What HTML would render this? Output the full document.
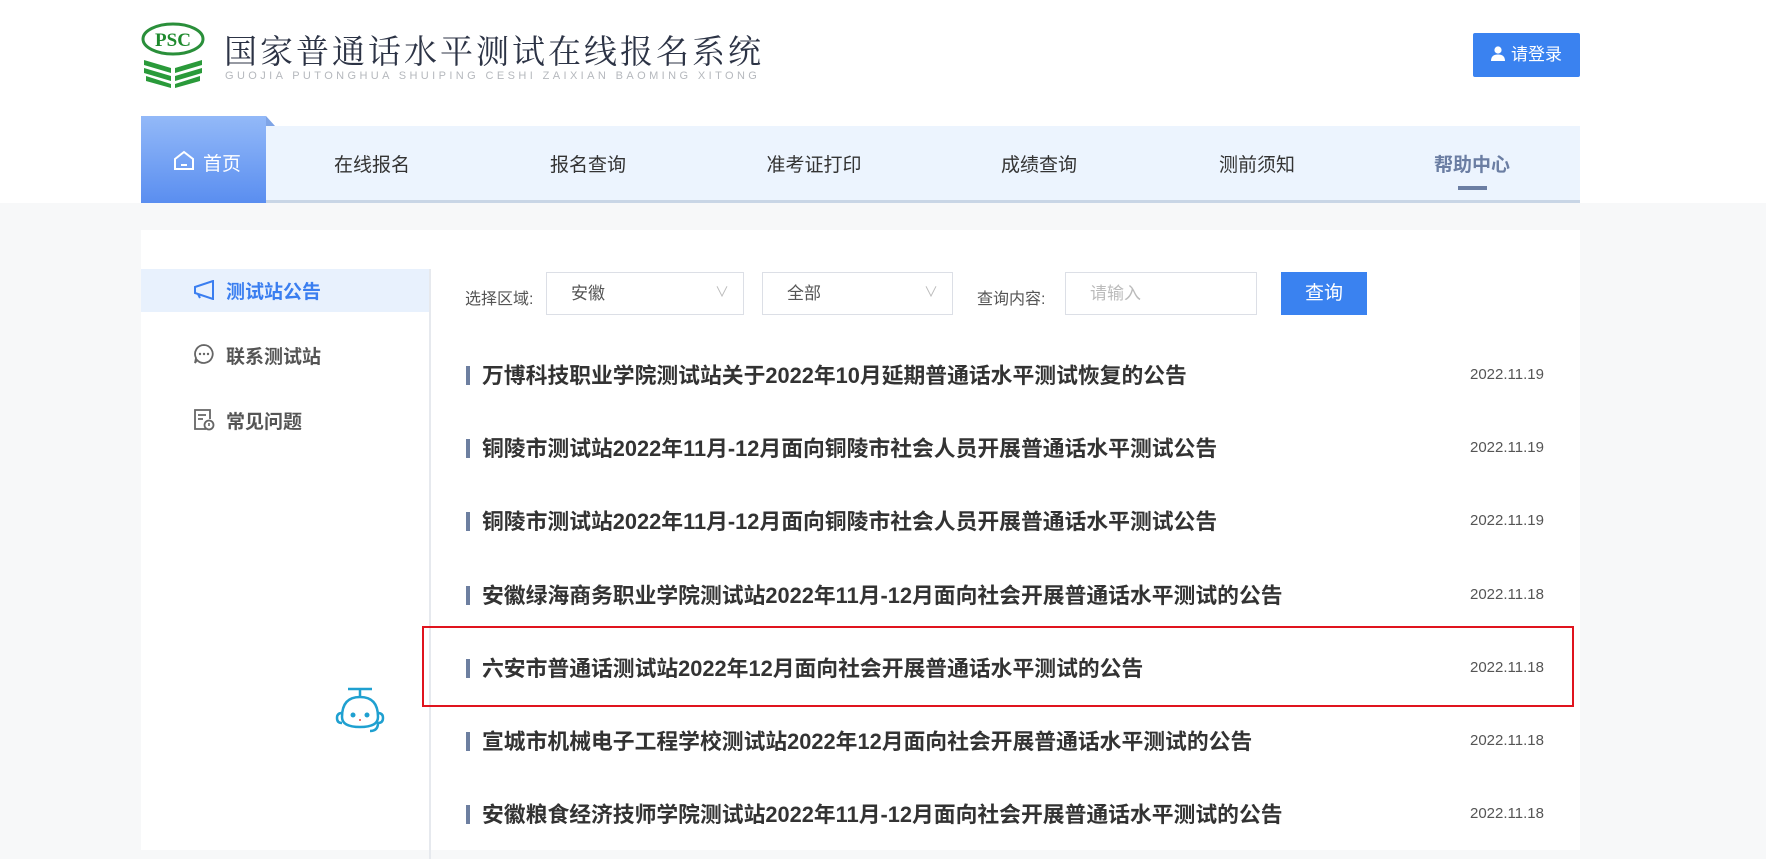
<!DOCTYPE html>
<html><head><meta charset="utf-8">
<style>
*{margin:0;padding:0;box-sizing:border-box}
body{width:1766px;height:848px;overflow:hidden;background:#f7f8f9;font-family:"Liberation Sans","Noto Sans CJK SC",sans-serif;position:relative}
.abs{position:absolute}
.top{left:0;top:0;width:1766px;height:203px;background:#fff}
.title{left:224px;top:26px;font-size:33px;color:#2c3345;letter-spacing:3px;font-family:"Liberation Serif","Noto Serif CJK SC",serif;white-space:nowrap}
.pinyin{left:225px;top:70px;font-size:11px;color:#b5b8bd;letter-spacing:3.4px;white-space:nowrap}
.login{left:1473px;top:33px;width:107px;height:44px;background:#3a82f0;border-radius:2px;color:#fff;font-size:17px;line-height:44px;text-align:center}
.nav{left:141px;top:126px;width:1439px;height:77px;background:#ecf4fe;border-bottom:3px solid #c9d6e6}
.nav span{position:absolute;top:24px;font-size:19px;color:#333;transform:translateX(-50%);white-space:nowrap}
.home{left:141px;top:116px;width:125px;height:87px;background:linear-gradient(#93b9f8,#5a8ef0);color:#fff;font-size:19px}
.card{left:141px;top:230px;width:1439px;height:620px;background:#fff}
.side{left:141px;top:269px;width:288px;height:43px;background:#e8f1fd}
.vline{left:429px;top:269px;width:2px;height:590px;background:#e6e9ee}
.si{left:226px;font-size:19px;font-weight:bold;color:#555;white-space:nowrap}
.lbl{font-size:16px;color:#555;top:283px}
.sel{top:272px;height:43px;border:1px solid #dcdfe6;font-size:17px;color:#555;line-height:41px;padding-left:24px}
.item{left:466px;font-size:21.8px;font-weight:bold;color:#333;white-space:nowrap}
.item:before{content:"";position:absolute;left:0;top:7px;width:4px;height:19px;background:#6d7fa0}
.item b{margin-left:16px;font-weight:bold}
.date{left:1470px;font-size:15px;color:#555}
</style></head><body>
<div class="abs top"></div>
<svg class="abs" style="left:140px;top:22px" width="66" height="66" viewBox="0 0 66 66">
<ellipse cx="33" cy="17" rx="30" ry="15" fill="none" stroke="#2a8f3a" stroke-width="3"/>
<text x="33" y="24" font-family="Liberation Serif" font-weight="bold" font-size="19" fill="#1f8a2e" text-anchor="middle">PSC</text>
<g fill="#2a9a3a"><path d="M4 38 L31 46 L31 51 L4 43Z"/><path d="M62 38 L35 46 L35 51 L62 43Z"/><path d="M4 46 L31 54 L31 59 L4 51Z"/><path d="M62 46 L35 54 L35 59 L62 51Z"/><path d="M6 54 L31 62 L31 66 L6 59Z"/><path d="M60 54 L35 62 L35 66 L60 59Z"/></g>
</svg>
<div class="abs title">国家普通话水平测试在线报名系统</div>
<div class="abs pinyin">GUOJIA PUTONGHUA SHUIPING CESHI ZAIXIAN BAOMING XITONG</div>
<div class="abs login"><svg width="14" height="15" viewBox="0 0 14 15" style="vertical-align:-1px;margin-right:6px"><circle cx="7" cy="4" r="3.6" fill="#fff"/><path d="M0 15 Q0 8.5 7 8.5 Q14 8.5 14 15Z" fill="#fff"/></svg>请登录</div>
<div class="abs nav">
<span style="left:231px">在线报名</span><span style="left:447px">报名查询</span><span style="left:673px">准考证打印</span><span style="left:898px">成绩查询</span><span style="left:1116px">测前须知</span><span style="left:1331px;font-weight:bold;color:#6b7ea3">帮助中心</span>
<div style="position:absolute;left:1317px;top:60px;width:29px;height:4px;background:#6b7ea3"></div>
</div>
<div class="abs home"><svg width="22" height="20" viewBox="0 0 22 20" style="position:absolute;left:32px;top:34px"><path d="M2 9 L11 2 L20 9 L20 19 L2 19Z" fill="none" stroke="#fff" stroke-width="2"/><path d="M8 15 H14" stroke="#fff" stroke-width="2"/></svg><span style="position:absolute;left:62px;top:33px">首页</span></div>
<div class="abs" style="left:266px;top:116px;width:0;height:0;border-left:9px solid #7ea4e6;border-top:10px solid transparent"></div>
<div class="abs card"></div>
<div class="abs side"></div>
<div class="abs vline"></div>
<svg class="abs" style="left:193px;top:280px" width="22" height="20" viewBox="0 0 22 20"><path d="M2 7 L20 1 L20 19 L2 13Z M5 14 L7 18" fill="none" stroke="#3a7ef0" stroke-width="2"/></svg>
<div class="abs si" style="top:277px;color:#3a7ef0">测试站公告</div>
<svg class="abs" style="left:193px;top:343px" width="22" height="22" viewBox="0 0 22 22"><path d="M11 2a9 9 0 1 1-7 15l-2 3 1-5a9 9 0 0 1 8-13z" fill="none" stroke="#666" stroke-width="1.8"/><circle cx="7" cy="11" r="1.2" fill="#666"/><circle cx="11" cy="11" r="1.2" fill="#666"/><circle cx="15" cy="11" r="1.2" fill="#666"/></svg>
<div class="abs si" style="top:342px">联系测试站</div>
<svg class="abs" style="left:193px;top:408px" width="22" height="24" viewBox="0 0 22 24"><path d="M13 21 H2 V2 H17 V11" fill="none" stroke="#666" stroke-width="1.8"/><path d="M5 7 H13 M5 11 H10" stroke="#666" stroke-width="1.8"/><circle cx="16" cy="17" r="4.5" fill="none" stroke="#666" stroke-width="1.8"/><path d="M16 15 V18" stroke="#666" stroke-width="1.6"/></svg>
<div class="abs si" style="top:407px">常见问题</div>
<div class="abs lbl" style="left:465px;top:285px">选择区域:</div>
<div class="abs sel" style="left:546px;width:198px">安徽<span style="position:absolute;right:14px;top:-1px;color:#bbb;font-size:14px">∨</span></div>
<div class="abs sel" style="left:762px;width:191px">全部<span style="position:absolute;right:14px;top:-1px;color:#bbb;font-size:14px">∨</span></div>
<div class="abs lbl" style="left:977px;top:285px">查询内容:</div>
<div class="abs sel" style="left:1065px;width:192px;color:#bbb">请输入</div>
<div class="abs" style="left:1281px;top:272px;width:86px;height:43px;background:#3a82f0;color:#fff;font-size:19px;text-align:center;line-height:43px">查询</div>
<div class="abs item" style="top:359px"><b>万博科技职业学院测试站关于2022年10月延期普通话水平测试恢复的公告</b></div>
<div class="abs date" style="top:366px">2022.11.19</div>
<div class="abs item" style="top:432px"><b>铜陵市测试站2022年11月-12月面向铜陵市社会人员开展普通话水平测试公告</b></div>
<div class="abs date" style="top:439px">2022.11.19</div>
<div class="abs item" style="top:505px"><b>铜陵市测试站2022年11月-12月面向铜陵市社会人员开展普通话水平测试公告</b></div>
<div class="abs date" style="top:512px">2022.11.19</div>
<div class="abs item" style="top:579px"><b>安徽绿海商务职业学院测试站2022年11月-12月面向社会开展普通话水平测试的公告</b></div>
<div class="abs date" style="top:586px">2022.11.18</div>
<div class="abs item" style="top:652px"><b>六安市普通话测试站2022年12月面向社会开展普通话水平测试的公告</b></div>
<div class="abs date" style="top:659px">2022.11.18</div>
<div class="abs item" style="top:725px"><b>宣城市机械电子工程学校测试站2022年12月面向社会开展普通话水平测试的公告</b></div>
<div class="abs date" style="top:732px">2022.11.18</div>
<div class="abs item" style="top:798px"><b>安徽粮食经济技师学院测试站2022年11月-12月面向社会开展普通话水平测试的公告</b></div>
<div class="abs date" style="top:805px">2022.11.18</div>
<div class="abs" style="left:422px;top:626px;width:1152px;height:81px;border:2px solid #e0141e"></div>
<svg class="abs" style="left:332px;top:685px" width="56" height="50" viewBox="0 0 56 50"><g fill="none" stroke="#1fa0d0" stroke-width="2.5"><path d="M16 4 H40 M28 4 V12"/><path d="M10 32 Q10 12 28 12 Q46 12 46 32 Q46 42 28 42 Q10 42 10 32Z"/><path d="M10 28 Q5 28 5 33 Q5 38 10 38 M46 28 Q51 28 51 33 Q51 38 46 38 Q46 46 38 46"/></g><circle cx="21" cy="30" r="2.5" fill="#1fa0d0"/><circle cx="35" cy="30" r="2.5" fill="#1fa0d0"/><circle cx="28" cy="35" r="1" fill="#e44"/></svg>
</body></html>
